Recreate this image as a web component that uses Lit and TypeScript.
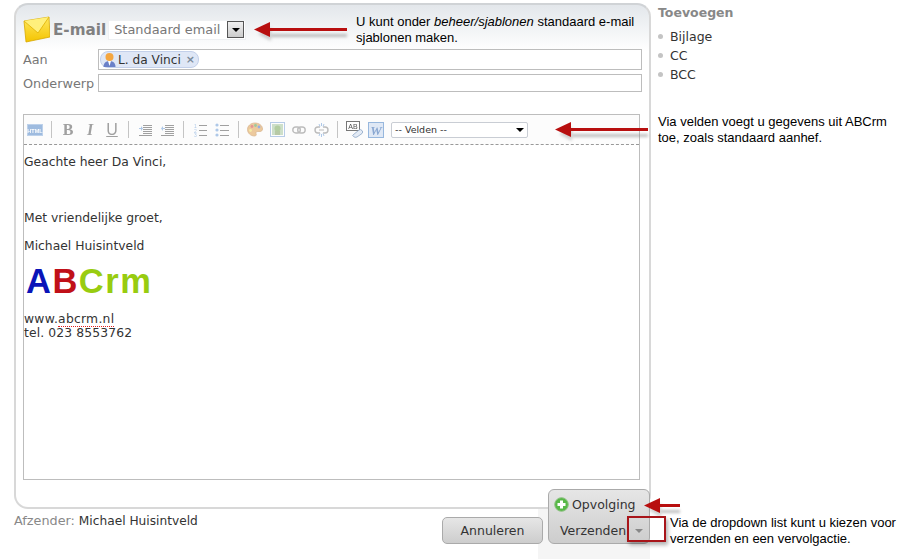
import { LitElement, html, css, svg } from "lit";
import { customElement } from "lit/decorators.js";

const ico = (w: number, h: number, body: unknown) => html`<svg width=${w} height=${h} viewBox="0 0 ${w} ${h}">${body}</svg>`;
const lines = (x1: number, x2: number, ys: number[]) => ys.map((y) => svg`<rect x=${x1} y=${y} width=${x2 - x1} height="1" fill="#555"/>`);

const icons = {
  html: ico(16, 12, svg`<rect x=".5" y=".5" width="15" height="11" fill="#7fa6d6" stroke="#a9c3e4"/><text x="8" y="8.500" font-size="5.500" font-weight="700" text-anchor="middle" fill="#fff" font-family="Liberation Sans">HTML</text>`),
  indent: ico(13, 12, svg`${lines(4, 13, [1, 3, 5, 7, 9])}${lines(0, 13, [11])}<path d="M0 4h2V2l2 2.500-2 2.500V5H0z" fill="#6f9fd8"/>`),
  outdent: ico(13, 12, svg`${lines(4, 13, [1, 3, 5, 7, 9])}${lines(0, 13, [11])}<path d="M4 4H2V2L0 4.500 2 7V5h2z" fill="#6f9fd8"/>`),
  ol: ico(13, 14, svg`${lines(5, 13, [2, 7, 12])}<text x="0" y="4.500" font-size="5" fill="#6f9fd8" font-family="Liberation Sans">1</text><text x="0" y="9.500" font-size="5" fill="#6f9fd8" font-family="Liberation Sans">2</text><text x="0" y="14" font-size="5" fill="#6f9fd8" font-family="Liberation Sans">3</text>`),
  ul: ico(14, 14, svg`${lines(5, 14, [2, 7, 12])}<circle cx="2" cy="2" r="1.600" fill="#6f9fd8"/><circle cx="2" cy="7" r="1.600" fill="#6f9fd8"/><circle cx="2" cy="12" r="1.600" fill="#6f9fd8"/>`),
  palette: ico(16, 15, svg`<path d="M8 1C3.500 1 .5 4 .5 7.500S3.500 14 7.500 14c2 0 2-1.500 1.500-2.500-.5-1.200.5-2 2-2h2c1.500 0 2.500-1 2.500-2.500C15.500 3.500 12 1 8 1z" fill="#e0a050" stroke="#b87830" stroke-width=".7"/><circle cx="5" cy="4.500" r="1.400" fill="#d04040"/><circle cx="8.500" cy="3.500" r="1.400" fill="#50a050"/><circle cx="12" cy="5" r="1.400" fill="#4070d0"/><circle cx="3.500" cy="8.500" r="1.400" fill="#f0e060"/>`),
  image: ico(15, 15, svg`<rect x=".5" y=".5" width="14" height="14" fill="#fff" stroke="#7fa6d6"/><rect x="2" y="2" width="11" height="11" fill="#a8c8a0"/><path d="M5 13V9h5v4z" fill="#80a060"/><circle cx="7.500" cy="6.500" r="3" fill="#78a858"/>`),
  link: ico(14, 8, svg`<rect x=".8" y="1" width="7.500" height="6" rx="3" fill="none" stroke="#888" stroke-width="1.400"/><rect x="5.700" y="1" width="7.500" height="6" rx="3" fill="none" stroke="#888" stroke-width="1.400"/>`),
  unlink: ico(15, 14, svg`<path d="M6 4H4a3 3 0 0 0 0 6h2M9 4h2a3 3 0 0 1 0 6H9" fill="none" stroke="#888" stroke-width="1.400"/><path d="M5 7h5" stroke="#888"/><path d="M7.500 0v3M5 1l1 2.500M10 1L9 3.500M7.500 14v-3M5 13l1-2.500M10 13l-1-2.500" stroke="#6f9fd8"/>`),
  spell: ico(17, 17, svg`<rect x=".5" y=".5" width="13" height="9" fill="#fff" stroke="#555"/><text x="7" y="7.500" font-size="7" text-anchor="middle" fill="#222" font-family="Liberation Sans">AB</text><path d="M7 14l6-5q1.500-1 3 .5t0 3l-5 3.500q-2 1-3.500-.5T7 14z" fill="#dfe8f4" stroke="#6f8fb8" stroke-width=".8"/>`),
  word: ico(16, 16, svg`<rect x=".5" y=".5" width="15" height="15" fill="#d8e4f4" stroke="#7fa6d6"/><text x="8" y="13" font-size="13" font-weight="700" font-style="italic" text-anchor="middle" fill="#6f94c8" font-family="Liberation Serif">W</text>`),
};

const arrow = (w: number) => html`<svg class="arrowsvg" width=${w + 8} height="26" viewBox="0 0 ${w + 8} 26">
  <path d="M17 16h${w - 17}v3H17z" fill="#8a8a8a" opacity=".55" filter="url(#b)"/>
  <path d="M4 16l13-7v14z" fill="#8a8a8a" opacity=".4" filter="url(#b)"/>
  <path d="M0 11.500L16 4v6h${w - 16}v3H16v6z" fill="#b80f0f"/>
  <defs><filter id="b" x="-20%" y="-200%" width="140%" height="500%"><feGaussianBlur stdDeviation="1.500"/></filter></defs>
</svg>`;

@customElement("app-root")
export class AppRoot extends LitElement {
  static styles = css`
    :host { display: block; position: relative; width: 899px; height: 559px; overflow: hidden; background: #fff;
      font-family: "DejaVu Sans", Verdana, sans-serif; font-size: 12px; color: #333; }
    .top { display: flex; align-items: flex-start; padding: 3px 0 0 14px; }
    .panel { box-sizing: border-box; width: 637px; height: 506px; border: 2px solid #d8d8d8; border-top-color: #d0d3d6; border-radius: 14px;
      background: linear-gradient(#e3e7eb, #fff 46px); padding: 11px 7px 0 7px; }
    .head { display: flex; align-items: center; height: 27px; }
    .title { font-weight: 700; font-size: 15.200px; color: #808080; margin-left: 3px; }
    .tpl { display: flex; align-items: center; justify-content: space-between; box-sizing: border-box; width: 138px; height: 20px; margin-left: 2px;
      padding: 0 1px 0 5px; border: 1px solid #eef0f2; background: #fff; font-size: 12.900px; color: #777; }
    .ddbtn { box-sizing: border-box; width: 17px; height: 17px; border: 1px solid #555; background: linear-gradient(#f0f0f0, #ccc); display: flex; align-items: center; justify-content: center; }
    .tri { width: 0; height: 0; border-left: 4px solid transparent; border-right: 4px solid transparent; border-top: 4px solid #000; }
    .row { display: flex; align-items: center; margin-top: 4px; }
    .row.first { margin-top: 6px; }
    .lab { width: 75px; font-size: 12.800px; color: #777; }
    .field { box-sizing: border-box; width: 544px; border: 1px solid #bdbdbd; background: #fff; display: flex; align-items: center; }
    .field.to { height: 21px; padding-left: 1px; }
    .field.subj { height: 18px; }
    .chip { display: flex; align-items: center; box-sizing: border-box; width: 99px; height: 17px; border: 1px solid #c3d0ea; border-radius: 8px; background: #dfe7f6; padding: 0 3px 0 1px; font-size: 12.200px; color: #333; }
    .chip span { margin-left: 1px; flex: 1; white-space: nowrap; }
    .chip i { font-style: normal; font-weight: 700; font-size: 11px; color: #7a8a9a; }
    .editor { box-sizing: border-box; width: 617px; height: 366px; margin-top: 22px; border: 1px solid #bdbdbd; background: #fff; }
    .tb { display: flex; align-items: center; box-sizing: border-box; height: 30px; background: #fcfcfc; border-bottom: 1px dashed #999; }
    .b { width: 22px; height: 22px; display: flex; align-items: center; justify-content: center; opacity: .55; }
    .b.keep { opacity: .75; }
    .b.strong { opacity: .8; }
    .b.t { font-family: "Liberation Serif", serif; font-size: 16px; color: #555; }
    .b.bold { font-weight: 700; }
    .b.it { font-style: italic; font-weight: 700; }
    .b.un { text-decoration: underline; font-family: "Liberation Sans", sans-serif; }
    .sep { width: 1px; height: 17px; background: #c4c4c4; margin: 0 5px; }
    .velden { box-sizing: border-box; width: 137px; height: 16px; margin-left: 4px; display: flex; align-items: center; justify-content: space-between;
      padding: 0 3px; border: 1px solid #c9cdd4; border-radius: 2px; background: #fff; font-size: 9.500px; color: #333; }
    .body { padding: 10px 0 0 0; font-size: 12.350px; color: #333; }
    .body p { margin: 0; line-height: 14px; }
    .gap1 { margin-top: 42px !important; }
    .gap2 { margin-top: 14px !important; }
    .logo { font-family: "Liberation Sans", sans-serif; font-weight: 700; font-size: 34.500px; line-height: 34px; height: 34px; margin: 11px 0 0 2px; letter-spacing: 1.500px; }
    .logo b:nth-child(1) { color: #0a14b8; }
    .logo b:nth-child(2) { color: #c01018; }
    .logo b:nth-child(3) { color: #98cc10; }
    .www { margin-top: 14px !important; letter-spacing: .25px; }
    .tel { letter-spacing: .13px; }
    .sq { border-bottom: 1px dotted #e02020; }
    .side { margin-left: 7px; padding-top: 3px; }
    .side h3 { margin: 0; font-size: 12.500px; line-height: 14px; font-weight: 700; color: #888; }
    .side ul { list-style: none; margin: 7px 0 0; padding: 0; }
    .side li { display: flex; align-items: center; height: 19px; font-size: 12.500px; color: #333; }
    .side li::before { content: ""; width: 5px; height: 5px; border-radius: 50%; background: #c4c4c4; margin: 0 7px 0 0; }
    .foot { position: relative; display: flex; align-items: flex-start; padding-left: 14px; margin-top: 5px; font-size: 12.200px; line-height: 14px; }
    .foot .k { color: #888; margin-right: 4px; font-size: 12.800px; }
    .shade { position: absolute; left: 538px; top: -5px; width: 112px; height: 50px; background: #f5f5f5; }
    .btn { box-sizing: border-box; border: 1px solid #aaa; background: linear-gradient(#e6e6e6, #cdcdcd); font-size: 12.500px; color: #333; }
    .cancel { position: absolute; left: 442px; top: 3px; width: 101px; height: 27px; padding-top: 1px; border-radius: 5px; display: flex; align-items: center; justify-content: center; }
    .split { position: absolute; left: 548px; top: -25px; width: 102px; height: 55px; border-radius: 6px; }
    .split > div { display: flex; align-items: center; white-space: nowrap; }
    .split .up { height: 29px; padding-left: 5px; }
    .split .up span { margin-left: 3px; }
    .split .dn { height: 23px; padding-left: 11px; gap: 9px; }
    .tri2 { width: 0; height: 0; border-left: 4px solid transparent; border-right: 4px solid transparent; border-top: 4px solid #888; }
    .note { position: absolute; font-family: "Liberation Sans", Arial, sans-serif; font-size: 13px; line-height: 16px; color: #000; white-space: nowrap; }
    .n1 { left: 356px; top: 14px; }
    .n2 { left: 658px; top: 114px; }
    .n3 { left: 670px; top: 515px; }
    .arrow { position: absolute; line-height: 0; }
    .a1 { left: 254px; top: 18px; }
    .a2 { left: 555px; top: 118px; }
    .a3 { left: 644px; top: 494px; }
    .redbox { position: absolute; left: 627px; top: 516px; width: 39px; height: 26px; box-sizing: border-box; border: 2px solid #a8151a; box-shadow: 2px 3px 4px rgba(0,0,0,.3); }
  `;

  render() {
    const btn = (i: unknown) => html`<div class="b">${i}</div>`;
    const strong = (i: unknown) => html`<div class="b strong">${i}</div>`;
    return html`
      <div class="top">
        <section class="panel">
          <div class="head">
            <svg width="27" height="27" viewBox="0 0 27 27">
              <defs><linearGradient id="env" x1="0" y1="0" x2="0" y2="1"><stop offset="0" stop-color="#ffe860"/><stop offset="1" stop-color="#f4c400"/></linearGradient></defs>
              <path d="M1 5L26 1l1 20L3 26z" fill="url(#env)" stroke="#d8a800" stroke-width=".8"/>
              <path d="M1 5L15 17 26 1" fill="#fff07c" stroke="#e0b000" stroke-width=".8"/>
            </svg>
            <span class="title">E-mail</span>
            <div class="tpl">Standaard email<div class="ddbtn"><div class="tri"></div></div></div>
          </div>
          <div class="row first">
            <div class="lab">Aan</div>
            <div class="field to">
              <div class="chip">
                <svg width="15" height="15" viewBox="0 0 15 15"><path d="M1.500 15c0-4 2.500-6 6-6s6 2 6 6z" fill="#6a80c8"/><path d="M6 9h3l-1.500 5z" fill="#fff"/><circle cx="7.500" cy="5" r="4" fill="#f4a640"/></svg>
                <span>L. da Vinci</span><i>×</i>
              </div>
            </div>
          </div>
          <div class="row">
            <div class="lab">Onderwerp</div>
            <div class="field subj"></div>
          </div>
          <div class="editor">
            <div class="tb">
              ${html`<div class="b keep">${icons.html}</div>`}
              <div class="sep"></div>
              <div class="b t bold">B</div><div class="b t it">I</div><div class="b t un">U</div>
              <div class="sep"></div>
              ${btn(icons.indent)}${btn(icons.outdent)}
              <div class="sep"></div>
              ${btn(icons.ol)}${btn(icons.ul)}
              <div class="sep"></div>
              ${btn(icons.palette)}${btn(icons.image)}${btn(icons.link)}${btn(icons.unlink)}
              <div class="sep"></div>
              ${strong(icons.spell)}${strong(icons.word)}
              <div class="velden">-- Velden --<div class="tri"></div></div>
            </div>
            <div class="body">
              <p>Geachte heer Da Vinci,</p>
              <p class="gap1">Met vriendelijke groet,</p>
              <p class="gap2">Michael Huisintveld</p>
              <div class="logo"><b>A</b><b>B</b><b>Crm</b></div>
              <p class="www">www.<span class="sq">abcrm.nl</span></p>
              <p class="tel">tel. 023 8553762</p>
            </div>
          </div>
        </section>
        <aside class="side">
          <h3>Toevoegen</h3>
          <ul><li>Bijlage</li><li>CC</li><li>BCC</li></ul>
        </aside>
      </div>
      <footer class="foot">
        <div class="shade"></div>
        <span class="k">Afzender:</span><span>Michael Huisintveld</span>
        <div class="btn cancel">Annuleren</div>
        <div class="btn split">
          <div class="up">
            <svg width="15" height="15" viewBox="0 0 15 15"><circle cx="7.500" cy="7.500" r="6.800" fill="#58b848" stroke="#8cc080"/><path d="M6 3.500h3V6h2.500v3H9v2.500H6V9H3.500V6H6z" fill="#fff"/></svg>
            <span>Opvolging</span>
          </div>
          <div class="dn">Verzenden<div class="tri2"></div></div>
        </div>
      </footer>
      <div class="note n1">U kunt onder <i>beheer/sjablonen</i> standaard e-mail<br />sjablonen maken.</div>
      <div class="note n2">Via velden voegt u gegevens uit ABCrm<br />toe, zoals standaard aanhef.</div>
      <div class="note n3">Via de dropdown list kunt u kiezen voor<br />verzenden en een vervolgactie.</div>
      <div class="arrow a1">${arrow(93)}</div>
      <div class="arrow a2">${arrow(93)}</div>
      <div class="arrow a3">${arrow(36)}</div>
      <div class="redbox"></div>
    `;
  }
}
